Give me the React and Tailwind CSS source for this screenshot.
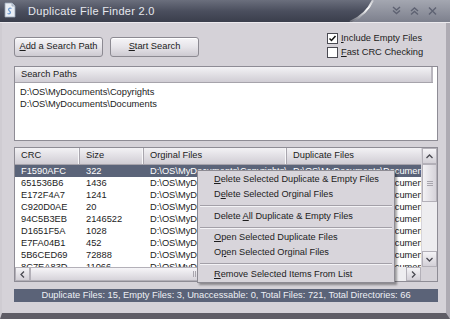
import React from "react";

const rows = [
  ["F1590AFC", "322"],
  ["651536B6", "1436"],
  ["E172F4A7", "1241"],
  ["C920D0AE", "20"],
  ["94C5B3EB", "2146522"],
  ["D1651F5A", "1028"],
  ["E7FA04B1", "452"],
  ["5B6CED69", "72888"],
  ["8C7EA83D", "11066"],
];

function U({ children }) {
  return <span className="underline underline-offset-[1px]">{children}</span>;
}

function TitleBar() {
  return (
    <div className="relative h-[22px] shrink-0 bg-gradient-to-b from-[#6b6f7d] via-[#4b4f5e] to-[#3a3e4c] overflow-hidden">
      <svg className="absolute left-0 top-0" width="450" height="22" viewBox="0 0 450 22">
        <defs>
          <linearGradient id="rg" x1="0" y1="0" x2="0" y2="1">
            <stop offset="0" stopColor="#a4a7b1" />
            <stop offset="1" stopColor="#7d808d" />
          </linearGradient>
          <linearGradient id="sw" x1="0" y1="1" x2="0" y2="0">
            <stop offset="0" stopColor="#ffffff" stopOpacity="0.2" />
            <stop offset="0.6" stopColor="#ffffff" stopOpacity="1" />
            <stop offset="1" stopColor="#ffffff" stopOpacity="0.6" />
          </linearGradient>
        </defs>
        <path d="M352 22 C363 17 370 10 374 0 L450 0 L450 22 Z" fill="url(#rg)" />
        <path d="M350 22 C362 17 369 9 373 0" fill="none" stroke="url(#sw)" strokeWidth="2.2" />
        <path d="M5 3 H12 L15 6 V17 H5 Z" fill="#e9eef5" stroke="#9aa6b8" strokeWidth="0.8" />
        <path d="M12 3 V6 H15" fill="#c9d3e0" stroke="#9aa6b8" strokeWidth="0.8" />
        <path d="M11.5 8.5 C9 7.5 7.5 9.5 9.5 11 C11.5 12.5 10 14.5 7.5 13.5" fill="none" stroke="#6f9bd0" strokeWidth="1.3" />
        <g fill="none" stroke="#5e6272" strokeWidth="1.4">
          <path d="M393 7 L396.5 10 L400 7 M393 10.5 L396.5 13.5 L400 10.5" />
          <path d="M411 11 L414.5 8 L418 11 M411 14.5 L414.5 11.5 L418 14.5" />
          <path d="M429 7.5 L436 14.5 M436 7.5 L429 14.5" />
        </g>
      </svg>
      <div className="absolute left-[28px] top-[4px] text-[11px] leading-[14px] text-[#e6e8ee] tracking-[0.3px]">
        Duplicate File Finder 2.0
      </div>
    </div>
  );
}

function Button({ children }) {
  return (
    <div className="w-[89px] h-[20px] rounded-[3px] border border-[#8c8a92] bg-gradient-to-b from-[#f6f5f8] via-[#e6e4e9] to-[#cdcad1] flex items-center justify-center text-[9.3px] text-[#1c1c1c] shadow-[inset_0_1px_0_#ffffff]">
      <span>{children}</span>
    </div>
  );
}

function CheckBox({ checked, children }) {
  return (
    <div className="flex items-center h-[13px] gap-[3px]">
      <div className="w-[11px] h-[11px] border border-[#4a4a52] bg-white flex items-center justify-center">
        {checked && (
          <svg width="9" height="9" viewBox="0 0 9 9">
            <path d="M1.5 4.5 L3.5 6.5 L7.5 2" fill="none" stroke="#111" strokeWidth="1.5" />
          </svg>
        )}
      </div>
      <div className="text-[9.3px] text-[#1c1c1c] leading-[13px]">{children}</div>
    </div>
  );
}

function HeaderCell({ w, children, last }) {
  return (
    <div
      className={`h-full ${w} shrink-0 pl-[6px] flex items-center border-r ${last ? "border-transparent" : "border-[#a9a6ae]"} shadow-[inset_-1px_0_0_#f8f8fa]`}
    >
      <span>{children}</span>
    </div>
  );
}

function MenuItem({ children }) {
  return (
    <div className="h-[15px] pl-[16px] flex items-center text-[9.2px] text-[#1c1c1c] whitespace-pre">
      <span>{children}</span>
    </div>
  );
}

function Sep() {
  return (
    <div className="h-[7px] flex flex-col justify-center px-[2px]">
      <div className="h-px bg-[#a3a0a8]" />
      <div className="h-px bg-[#f4f3f6]" />
    </div>
  );
}

export default function App() {
  return (
    <div className="w-[450px] h-[319px] flex flex-col bg-[#d5d2d8] overflow-hidden font-['Liberation_Sans',Arial,sans-serif] text-[#1c1c1c]">
      <TitleBar />
      <div className="h-px bg-[#eceaee] shrink-0" />
      <div className="relative flex-1 flex flex-col pl-[12px] pr-[8px] border-l-[2px] border-l-[#cfccd2] border-r-[4px] border-r-[#aeabb3] border-b-[6px] border-b-[#5f5d66]">
        {/* top controls */}
        <div className="h-[43px] flex shrink-0">
          <div className="flex gap-[7px] pt-[14px]">
            <Button>
              <U>A</U>dd a Search Path
            </Button>
            <Button>
              <U>S</U>tart Search
            </Button>
          </div>
          <div className="ml-auto mr-[9px] pt-[9px] flex flex-col gap-[1px] w-[102px]">
            <CheckBox checked>
              <U>I</U>nclude Empty Files
            </CheckBox>
            <CheckBox>
              <U>F</U>ast CRC Checking
            </CheckBox>
          </div>
        </div>

        {/* search paths */}
        <div className="h-[75px] shrink-0 border border-[#8e8c95] bg-white flex flex-col">
          <div className="h-[16px] mr-[4px] bg-gradient-to-b from-[#f3f2f5] to-[#d0cdd4] border-b border-[#a6a3ab] flex items-center pl-[6px] text-[9.3px] shadow-[inset_-2px_0_0_#b9b6be]">
            Search Paths
          </div>
          <div className="pl-[5px] pt-[3px] text-[9.3px] leading-[12px]">
            <div>D:\OS\MyDocuments\Copyrights</div>
            <div>D:\OS\MyDocuments\Documents</div>
          </div>
        </div>

        {/* results */}
        <div className="mt-[6px] h-[135px] shrink-0 border border-[#8e8c95] bg-white grid grid-cols-[1fr_16px] grid-rows-[1fr_14px]">
          <div className="overflow-hidden flex flex-col text-[9.3px]">
            <div className="h-[17px] shrink-0 flex bg-gradient-to-b from-[#f3f2f5] to-[#d0cdd4] border-b border-[#a6a3ab]">
              <HeaderCell w="w-[65px]">CRC</HeaderCell>
              <HeaderCell w="w-[64px]">Size</HeaderCell>
              <HeaderCell w="w-[143px]">Orginal Files</HeaderCell>
              <HeaderCell w="w-[160px]" last>
                Duplicate Files
              </HeaderCell>
            </div>
            {rows.map((r, i) => (
              <div
                key={r[0]}
                className={`h-[12px] shrink-0 flex items-center whitespace-nowrap leading-[12px] ${i === 0 ? "bg-[#5b6479] text-white" : ""}`}
              >
                <div className="w-[65px] shrink-0 pl-[6px] overflow-hidden">{r[0]}</div>
                <div className="w-[64px] shrink-0 pl-[6px] overflow-hidden">{r[1]}</div>
                <div className="w-[143px] shrink-0 pl-[6px] overflow-hidden">D:\OS\MyDocuments\Copyrights\file{i + 1}.doc</div>
                <div className="w-[160px] shrink-0 pl-[6px] overflow-hidden">D:\OS\MyDocuments\Documents\file{i + 1}.doc</div>
              </div>
            ))}
          </div>
          {/* vertical scrollbar */}
          <div className="flex flex-col bg-[#eeedf0] border-l border-[#d6d4da]">
            <div className="h-[16px] shrink-0 bg-gradient-to-b from-[#f5f4f7] to-[#d3d0d7] border border-[#b3b0b8] flex items-center justify-center">
              <svg width="7" height="5" viewBox="0 0 7 5">
                <path d="M0.5 4 L3.5 1 L6.5 4" fill="none" stroke="#4a4a52" strokeWidth="1.3" />
              </svg>
            </div>
            <div className="h-[38px] shrink-0 bg-gradient-to-r from-[#f3f2f5] to-[#d6d3da] border border-[#b3b0b8] flex flex-col items-center justify-center gap-[1px]">
              <div className="w-[6px] h-px bg-[#a8a5ad]" />
              <div className="w-[6px] h-px bg-[#a8a5ad]" />
              <div className="w-[6px] h-px bg-[#a8a5ad]" />
            </div>
            <div className="flex-1" />
            <div className="h-[16px] shrink-0 bg-gradient-to-b from-[#f5f4f7] to-[#d3d0d7] border border-[#b3b0b8] flex items-center justify-center">
              <svg width="7" height="5" viewBox="0 0 7 5">
                <path d="M0.5 1 L3.5 4 L6.5 1" fill="none" stroke="#4a4a52" strokeWidth="1.3" />
              </svg>
            </div>
          </div>
          {/* horizontal scrollbar */}
          <div className="flex bg-[#eeedf0]">
            <div className="w-[15px] shrink-0 bg-gradient-to-b from-[#f5f4f7] to-[#d3d0d7] border border-[#b3b0b8] flex items-center justify-center">
              <svg width="5" height="7" viewBox="0 0 5 7">
                <path d="M4 0.5 L1 3.5 L4 6.5" fill="none" stroke="#4a4a52" strokeWidth="1.3" />
              </svg>
            </div>
            <div className="w-[330px] shrink-0 bg-gradient-to-b from-[#f6f5f8] to-[#d6d3da] border border-[#b3b0b8] flex items-center justify-center gap-[1px]">
              <div className="w-px h-[6px] bg-[#a8a5ad]" />
              <div className="w-px h-[6px] bg-[#a8a5ad]" />
              <div className="w-px h-[6px] bg-[#a8a5ad]" />
            </div>
            <div className="flex-1" />
            <div className="w-[15px] shrink-0 bg-gradient-to-b from-[#f5f4f7] to-[#d3d0d7] border border-[#b3b0b8] flex items-center justify-center">
              <svg width="5" height="7" viewBox="0 0 5 7">
                <path d="M1 0.5 L4 3.5 L1 6.5" fill="none" stroke="#4a4a52" strokeWidth="1.3" />
              </svg>
            </div>
          </div>
          <div className="bg-[#d5d2d8]" />
        </div>

        {/* status bar */}
        <div className="mt-[7px] h-[13px] shrink-0 bg-[#5b6378] text-[#eef0f5] text-[9.3px] leading-[13px] text-center whitespace-nowrap">
          Duplicate Files: 15, Empty Files: 3, Unaccessable: 0, Total Files: 721, Total Directories: 66
        </div>

        {/* context menu */}
        <div className="absolute left-[195px] top-[147px] w-[198px] h-[113px] bg-[#d8d5db] border border-[#8d8b93] shadow-[2px_2px_2px_rgba(0,0,0,0.35)] pt-[2px] flex flex-col">
          <MenuItem>
            <U>D</U>elete Selected Duplicate &amp; Empty Files
          </MenuItem>
          <MenuItem>
            D<U>e</U>lete Selected Orginal Files
          </MenuItem>
          <Sep />
          <MenuItem>
            {"Delete "}<U>A</U>ll Duplicate &amp; Empty Files
          </MenuItem>
          <Sep />
          <MenuItem>
            <U>O</U>pen Selected Duplicate Files
          </MenuItem>
          <MenuItem>
            O<U>p</U>en Selected Orginal Files
          </MenuItem>
          <Sep />
          <MenuItem>
            <U>R</U>emove Selected Items From List
          </MenuItem>
        </div>
      </div>
    </div>
  );
}
